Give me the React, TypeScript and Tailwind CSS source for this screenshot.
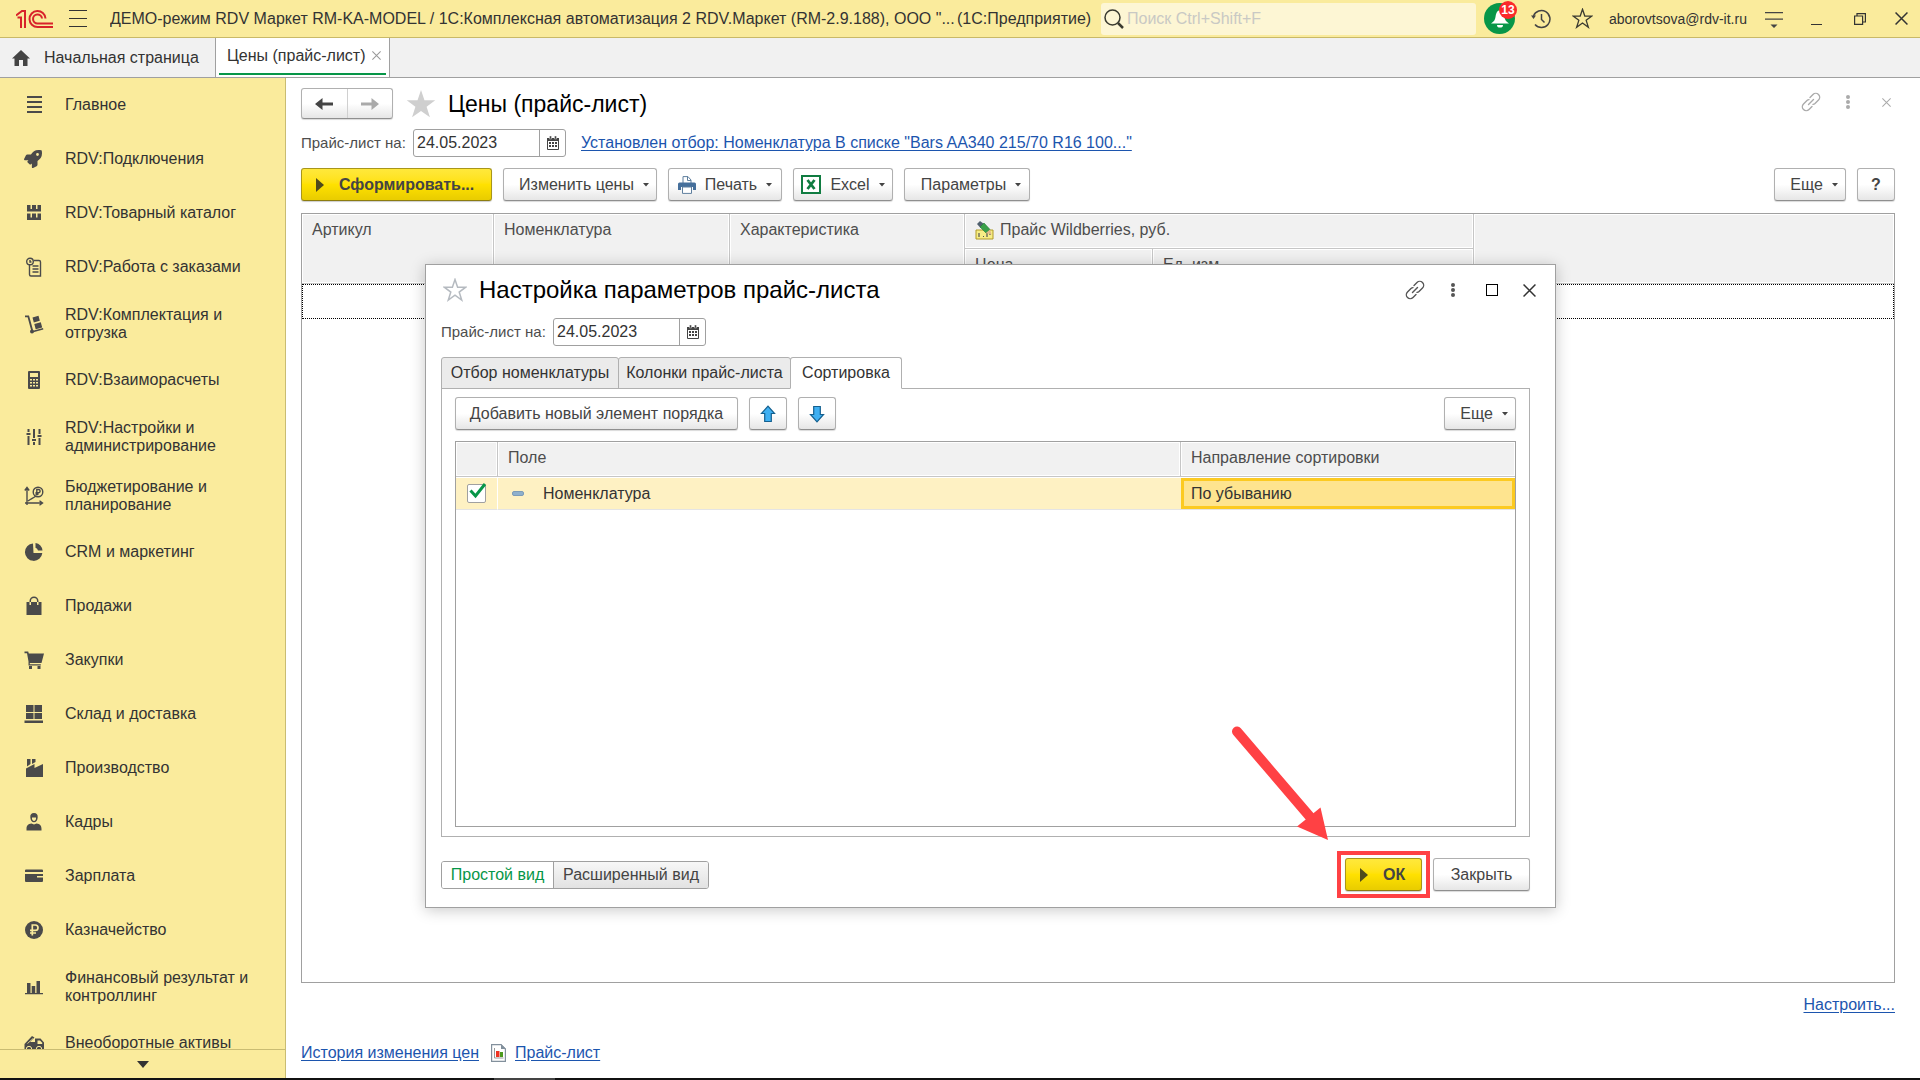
import React, { useState } from 'react';
import { FaRocket } from 'react-icons/fa';

const FONT = "font-['Liberation_Sans',Arial,sans-serif]";

/* ---------- sidebar icons, all on a 20x20 grid ---------- */

const icons: Record<string, React.ReactNode> = {
  main: (
    <g>
      <rect x="3" y="1" width="15" height="2" />
      <rect x="3" y="6" width="15" height="2" />
      <rect x="3" y="11" width="15" height="2" />
      <rect x="3" y="16" width="15" height="2" />
    </g>
  ),
  catalog: (
    <g>
      <path d="M3 2h3.500v4.500H3zM8 2h4v4.500H8zM13.500 2H17v4.500h-3.500zM3 6h14v2.500H3z" />
      <path d="M3 10.500h3.500V15H3zM8 10.500h4V15H8zM13.500 10.500H17V15h-3.500zM3 14.500h14V17H3z" />
    </g>
  ),
  orders: (
    <g fill="none" stroke="currentColor" strokeWidth="1.400">
      <circle cx="6" cy="4.500" r="3.300" />
      <path d="M6 3v2h1.500M5.500 8v9.500a1.500 1.500 0 0 0 1.500 1.500h9.500V5a1.500 1.500 0 0 0-1.500-1.500h-5" />
      <path d="M8.500 9h6M8.500 12h6M8.500 15h6" />
    </g>
  ),
  trolley: (
    <g>
      <path d="M1 1.500h4l4 14.500-1.800.5L3.600 3.300H1z" />
      <circle cx="8" cy="17.500" r="2" />
      <path d="M8.500 3.500l6-1.700 1.300 5-6 1.700zM10.300 10l6.500-1.800 1.400 5.200-6.500 1.800zM9 16.800l10-2.800.4 1.500-10 2.800z" />
    </g>
  ),
  calc: (
    <path
      fillRule="evenodd"
      d="M5 1h10a1 1 0 0 1 1 1v16a1 1 0 0 1-1 1H5a1 1 0 0 1-1-1V2a1 1 0 0 1 1-1zM6 3v4h8V3zM6 9v1.500h2V9zm3 0v1.500h2V9zm3 0v1.500h2V9zM6 12v1.500h2V12zm3 0v1.500h2V12zm3 0v1.500h2V12zM6 15v1.500h2V15zm3 0v1.500h2V15zm3 0v1.500h2V15z"
    />
  ),
  sliders: (
    <path d="M3.500 2h2v3h-2zM2.500 6h4v2h-4zM3.500 9h2v9h-2zM9 2h2v9H9zM8 12h4v2H8zM9 15h2v3H9zM14.500 2h2v5h-2zM13.500 8h4v2h-4zM14.500 11h2v7h-2z" />
  ),
  budget: (
    <g fill="none" stroke="currentColor" strokeWidth="1.400">
      <path d="M3 19V2M.8 4.500L3 1.500l2.200 3M1 17h17M15.500 14.800l3 2.200-3 2.200M4 15l3-2 2-1 3-2" />
      <circle cx="14" cy="6" r="4.800" />
      <path d="M12.800 9.500v-6h1.700a1.500 1.500 0 0 1 0 3.200h-3M11.500 8.200h3" />
    </g>
  ),
  pie: (
    <g>
      <path d="M9 1.500a8.700 8.700 0 1 0 9.300 9.500H9.500z" />
      <path d="M11.500 1a8 8 0 0 1 7 7.500h-4.500a4 4 0 0 0-2.500-2.800z" />
    </g>
  ),
  bag: (
    <path
      fillRule="evenodd"
      d="M2.500 6h3V5a4.500 4.500 0 0 1 9 0v1h3v13h-15zM7 5v4h-1.500V6H7zm6 0a3 3 0 0 0-6 0v1h6zm0 1h1.500v3H13z"
    />
  ),
  cart: (
    <path d="M.5 1.500h3.700l.6 2H20l-2.500 9.500H5.800v1.200h11v1.300H4.500v-4L3 3.200H.5zM5 16h3v3H5zM13.500 16h3v3h-3z" />
  ),
  stock: (
    <path d="M2 1h7.500v7H2zM10.500 1H18v7h-7.500zM2 9h7.500v6H2zM10.500 9H18v6h-7.500zM.5 16.500H19V19H.5z" />
  ),
  factory: (
    <path d="M3 1h3.500v5L3 8.500zM8 1h3.500v3L8 6zM2 10.500L10.500 6v4L19 6v13H2z" />
  ),
  person: (
    <g>
      <path d="M6.300 5.500C6 2.500 7.300 1 10 1s4 1.500 3.700 4.500c-.2 3-1.700 4.700-3.700 4.700s-3.500-1.700-3.700-4.700z" />
      <path d="M8 5.500h4v1C12 8 11 9 10 9S8 8 8 6.500z" fill="#faeb9c" />
      <path d="M2.500 17c0-3.500 1.500-5 5-5.500L10 12.500l2.500-1c3.500.5 5 2 5 5.500v1.500h-15z" />
    </g>
  ),
  card: <path d="M2 3.500h16a1 1 0 0 1 1 1V6H1V4.500a1 1 0 0 1 1-1zM1 8h18v2h-6v1.500h6V15a1 1 0 0 1-1 1H2a1 1 0 0 1-1-1z" />,
  ruble: (
    <g>
      <circle cx="10" cy="10" r="9" />
      <path d="M8.300 15.500V5h3a2.700 2.700 0 0 1 0 5.400H6M6 13h6" fill="none" stroke="#faeb9c" strokeWidth="1.700" />
    </g>
  ),
  bars: <path d="M3 6h3.500v10H3zM7.700 9h3.500v7H7.700zM12.500 4H16v12h-3.500zM1 16h18v1.300H1z" />,
  truck: (
    <g>
      <path d="M.5 11L8 3l2.500 1.500L6 9h5V5.500h5.500L20 9.500V16H.5z" />
      <path d="M13.500 7.500v3.500h4.700V9.800l-2.200-2.300z" fill="#faeb9c" />
      <path d="M3.500 10.500l5.500-5" stroke="#faeb9c" strokeWidth=".8" />
      <circle cx="5" cy="16" r="2.700" stroke="#faeb9c" />
      <circle cx="15" cy="16" r="2.700" stroke="#faeb9c" />
    </g>
  ),
};

const sections: { icon: string; label: string; tall?: boolean }[] = [
  { icon: 'main', label: 'Главное' },
  { icon: 'rocket', label: 'RDV:Подключения' },
  { icon: 'catalog', label: 'RDV:Товарный каталог' },
  { icon: 'orders', label: 'RDV:Работа с заказами' },
  { icon: 'trolley', label: 'RDV:Комплектация и отгрузка', tall: true },
  { icon: 'calc', label: 'RDV:Взаиморасчеты' },
  { icon: 'sliders', label: 'RDV:Настройки и администрирование', tall: true },
  { icon: 'budget', label: 'Бюджетирование и планирование', tall: true },
  { icon: 'pie', label: 'CRM и маркетинг' },
  { icon: 'bag', label: 'Продажи' },
  { icon: 'cart', label: 'Закупки' },
  { icon: 'stock', label: 'Склад и доставка' },
  { icon: 'factory', label: 'Производство' },
  { icon: 'person', label: 'Кадры' },
  { icon: 'card', label: 'Зарплата' },
  { icon: 'ruble', label: 'Казначейство' },
  { icon: 'bars', label: 'Финансовый результат и контроллинг', tall: true },
  { icon: 'truck', label: 'Внеоборотные активы' },
];

function SectionIcon({ name }: { name: string }) {
  if (name === 'rocket') return <FaRocket className="size-[18px]" />;
  return (
    <svg viewBox="0 0 20 20" className="size-5" fill="currentColor">
      {icons[name]}
    </svg>
  );
}

/* ---------- small shared drawings ---------- */

const Caret = () => (
  <svg viewBox="0 0 6 4" className="h-[4px] w-[6px] shrink-0" fill="#444">
    <path d="M0 0h6L3 3.500z" />
  </svg>
);

const Play = () => (
  <svg viewBox="0 0 8 14" className="h-[14px] w-2 shrink-0" fill="#4f4a1c">
    <path d="M0 0l8 7-8 7z" />
  </svg>
);

function Star({ className, filled }: { className: string; filled?: boolean }) {
  return (
    <svg viewBox="0 0 24 24" className={className} fill={filled ? 'currentColor' : 'none'} stroke={filled ? 'none' : 'currentColor'} strokeWidth="1.500">
      <path d="M12 1.500l2.600 7.700h8.100l-6.500 4.900 2.500 7.900L12 17.200 5.300 22l2.500-7.900-6.500-4.900h8.100z" />
    </svg>
  );
}

const LinkIcon = () => (
  <svg viewBox="0 0 20 20" className="size-5" fill="none" stroke="currentColor" strokeWidth="1.400" strokeLinecap="round">
    <path d="M9 5.500l3-3a3.800 3.800 0 0 1 5.500 5.500l-3.500 3.500a3.500 3.500 0 0 1-2 .9" />
    <path d="M11 14.500l-3 3A3.800 3.800 0 0 1 2.500 12L6 8.500a3.500 3.500 0 0 1 2-.9" />
    <path d="M7.500 12.500l5-5" />
  </svg>
);

const Dots = () => (
  <svg viewBox="0 0 4 14" className="h-[14px] w-1" fill="currentColor">
    <circle cx="2" cy="2" r="2" />
    <circle cx="2" cy="7" r="2" />
    <circle cx="2" cy="12" r="2" />
  </svg>
);

function Cross({ className }: { className: string }) {
  return (
    <svg viewBox="0 0 12 12" className={className} fill="none" stroke="currentColor" strokeWidth="1.400">
      <path d="M.5.5l11 11M11.500.5l-11 11" />
    </svg>
  );
}

const Calendar = () => (
  <svg viewBox="0 0 12 14" className="h-[14px] w-3">
    <path d="M.5 2.500h11v11H.5z" fill="#fff" stroke="#444" />
    <path d="M0 2h12v3H0z" fill="#444" />
    <path d="M2.500 0h2v3h-2zM7.500 0h2v3h-2z" fill="#444" stroke="#fff" strokeWidth=".4" />
    <path d="M2 6h2v2H2zM5 6h2v2H5zM8 6h2v2H8zM2 9h2v2H2zM5 9h2v2H5zM8 9h2v2H8z" fill="#444" />
  </svg>
);

function Arrow({ className }: { className?: string }) {
  return (
    <svg viewBox="0 0 18 14" className={`h-[14px] w-[18px] ${className ?? ''}`} fill="currentColor">
      <path d="M0 7l7.500-6v4.500H18v3H7.500V13z" />
    </svg>
  );
}

const BlueArrow = ({ down }: { down?: boolean }) => (
  <svg viewBox="0 0 16 18" className={down ? 'h-[18px] w-4 rotate-180' : 'h-[18px] w-4'}>
    <path d="M8 1.200l6.500 7.300h-3.200v8H4.700v-8H1.500z" fill="#3fb0f2" stroke="#14608f" strokeWidth="1.200" />
  </svg>
);

/* ---------- controls ---------- */

function Button({ className = '', children, ...rest }: React.ButtonHTMLAttributes<HTMLButtonElement>) {
  return (
    <button
      className={`flex h-[33px] items-center justify-center rounded-[3px] border border-[#b0b0b0] border-b-[#8f8f8f] bg-linear-to-b from-white from-50% to-[#e6e6e6] text-[#444] shadow-[0_1px_1px_rgba(0,0,0,0.15)] ${className}`}
      {...rest}
    >
      {children}
    </button>
  );
}

function YellowButton({ className = '', children }: { className?: string; children: React.ReactNode }) {
  return (
    <button
      className={`flex h-[33px] items-center rounded-[3px] border border-[#a8961a] border-b-[#8c7c10] bg-linear-to-b from-[#ffe83b] via-[#ffe100] to-[#e8cc00] font-bold text-[#444] shadow-[0_1px_1px_rgba(0,0,0,0.2)] ${className}`}
    >
      {children}
    </button>
  );
}

function DateField({ id }: { id: string }) {
  const [value, setValue] = useState('24.05.2023');
  return (
    <div className="flex h-7 items-center">
      <label htmlFor={id} className="w-28 shrink-0 text-[15px] text-[#4d4d4d]">
        Прайс-лист на:
      </label>
      <div className="flex h-7 w-[153px] overflow-hidden rounded-[3px] border border-[#a0a0a0] bg-white">
        <input
          id={id}
          value={value}
          onChange={(e) => setValue(e.target.value)}
          className="w-[125px] px-[3px] text-[#333] outline-none"
        />
        <button aria-label="Календарь" className="flex flex-1 items-center justify-center border-l border-[#a0a0a0]">
          <Calendar />
        </button>
      </div>
    </div>
  );
}

/* ---------- page parts ---------- */

function TopBar() {
  return (
    <header className="flex h-[38px] shrink-0 items-center border-b border-[#c9b968] bg-[#faeb9c] text-[#333]">
      <svg viewBox="0 0 38 20" className="ml-4 h-5 w-[38px]" fill="none" stroke="#d8232a" strokeWidth="2">
        <path d="M0 6.500L6 2h3v17M1.500 8.500h3.500V19" />
        <path d="M29.500 9.500a8 8 0 1 0-8 8.500H37" />
        <path d="M26 9.500a4.500 4.500 0 1 0-4.500 5H37" />
      </svg>
      <button aria-label="Меню" className="ml-[15px] flex h-[17px] w-[18px] flex-col justify-between">
        <span className="h-px w-full bg-[#333]" />
        <span className="h-px w-full bg-[#333]" />
        <span className="h-px w-full bg-[#333]" />
      </button>
      <div className="ml-[23px] w-[847px] shrink-0 truncate">
        ДЕМО-режим RDV Маркет RM-KA-MODEL / 1С:Комплексная автоматизация 2 RDV.Маркет (RM-2.9.188), ООО "...
      </div>
      <div className="w-[144px] shrink-0">(1С:Предприятие)</div>
      <div className="flex h-8 flex-1 items-center rounded-[3px] bg-[#fdf6d4] pl-[3px]">
        <svg viewBox="0 0 20 20" className="size-5 shrink-0" fill="none" stroke="#3a3a30">
          <circle cx="8.500" cy="8.500" r="7.500" strokeWidth="1.500" />
          <path d="M14 14l5 5" strokeWidth="2.500" />
        </svg>
        <input aria-label="Поиск" placeholder="Поиск Ctrl+Shift+F" className="ml-[3px] w-full bg-transparent outline-none placeholder:text-[#c9c9c4]" />
      </div>
      <button aria-label="Оповещения" className="relative ml-2 flex size-[31px] items-center justify-center rounded-full bg-[#079648]">
        <svg viewBox="0 0 18 18" className="size-[18px]" fill="#fff">
          <path d="M9 0c3.500 1 4 4 4.500 7S15 11.500 18 13.500H0C3 11.500 4 10 4.500 7S5.500 1 9 0zM6 15h6a3 2.600 0 0 1-6 0z" />
        </svg>
        <span className="absolute -top-[2px] -right-[2px] flex size-[18px] items-center justify-center rounded-full bg-[#fb2a2a] text-xs font-bold text-white">
          13
        </span>
      </button>
      <button aria-label="История" className="ml-4">
        <svg viewBox="0 0 20 20" className="size-5" fill="none" stroke="#444" strokeWidth="1.500">
          <path d="M2.500 7A8.500 8.500 0 1 1 4 15.500" />
          <path d="M0 6.500h5L2.500 10z" fill="#444" stroke="none" />
          <path d="M10.500 5v5.500l3 3" />
        </svg>
      </button>
      <button aria-label="Избранное" className="ml-[21px]">
        <Star className="size-[21px] text-[#3a3a30]" />
      </button>
      <span className="ml-4 w-[156px] shrink-0 text-sm">aborovtsova@rdv-it.ru</span>
      <button aria-label="Настройки" className="shrink-0">
        <svg viewBox="0 0 18 18" className="size-[18px]" fill="#444">
          <path d="M0 2h18v1.300H0zM0 8.500h18v1.300H0zM5.500 14.500h7L9 18z" />
        </svg>
      </button>
      <button aria-label="Свернуть" className="ml-7 h-3 w-[11px] border-b border-[#333]" />
      <button aria-label="Восстановить" className="ml-8">
        <svg viewBox="0 0 12 12" className="size-3" fill="none" stroke="#333" strokeWidth="1.200">
          <path d="M.6 3h8v8.400h-8zM3 3V.6h8.400V9H8.600" />
        </svg>
      </button>
      <button aria-label="Закрыть программу" className="mr-3 ml-[29px]">
        <Cross className="size-[13px]" />
      </button>
    </header>
  );
}

function WindowTabs() {
  return (
    <nav className="flex h-10 shrink-0 border-b border-[#a0a0a0] bg-[#f1f1f1] text-[#333]">
      <a href="#home" className="flex w-[216px] items-center border-r border-[#a0a0a0] pl-3">
        <svg viewBox="0 0 18 16" className="h-4 w-[18px]" fill="#444">
          <path d="M9 0l9 8.500h-2.500V16H11v-6H7v6H2.500V8.500H0z" />
        </svg>
        <span className="ml-[14px]">Начальная страница</span>
      </a>
      <div className="flex w-[174px] flex-col border-r border-[#a0a0a0] bg-white px-[3px]">
        <div className="flex flex-1 items-center pl-2">
          <a href="#prices" className="whitespace-nowrap">Цены (прайс-лист)</a>
          <button aria-label="Закрыть вкладку" className="ml-auto pr-[5px]">
            <Cross className="size-[9px] text-[#999]" />
          </button>
        </div>
        <div className="mb-[2px] h-[2px] bg-[#079648]" />
      </div>
    </nav>
  );
}

function Sidebar() {
  return (
    <aside className="flex w-[286px] shrink-0 flex-col border-r border-[#c9bc72] bg-[#faeb9c]">
      <ul className="min-h-0 flex-1 overflow-hidden">
        {sections.map((s) => (
          <li key={s.label}>
            <a href="#section" className={`flex items-center pl-6 leading-[18px] text-[#333] ${s.tall ? 'h-[59px]' : 'h-[54px]'}`}>
              <span className="flex w-[41px] shrink-0 text-[#4a4a4a]">
                <SectionIcon name={s.icon} />
              </span>
              <span className="w-[190px]">{s.label}</span>
            </a>
          </li>
        ))}
      </ul>
      <button aria-label="Прокрутить вниз" className="flex h-[29px] shrink-0 items-center justify-center border-t border-[#c9bc72]">
        <svg viewBox="0 0 12 7" className="h-[7px] w-3" fill="#333">
          <path d="M0 0h12L6 7z" />
        </svg>
      </button>
    </aside>
  );
}

const TH = 'border-r border-b border-[#c6c6c6] bg-[#f1f1f1] px-[10px] pt-1 text-left align-top font-normal text-[#4d4d4d] shadow-[inset_0_0_0_1px_#fff]';

function PriceTable() {
  return (
    <div className="mt-3 flex-1 border border-[#a0a0a0]">
      <table className="w-full table-fixed border-separate border-spacing-0">
        <colgroup>
          <col className="w-[192px]" />
          <col className="w-[236px]" />
          <col className="w-[235px]" />
          <col className="w-[188px]" />
          <col className="w-[321px]" />
          <col />
        </colgroup>
        <thead>
          <tr className="h-[35px]">
            <th rowSpan={2} className={TH}>Артикул</th>
            <th rowSpan={2} className={TH}>Номенклатура</th>
            <th rowSpan={2} className={TH}>Характеристика</th>
            <th colSpan={2} className={TH}>
              <span className="flex items-center gap-[6px]">
                <svg viewBox="0 0 19 19" className="size-[19px]">
                  <path d="M1 9h17v9H1z" fill="#f7ee85" stroke="#b09a28" />
                  <path d="M4 12v4M8 15.500h1M12 12v4M15 12v2" stroke="#555" strokeWidth="1.200" />
                  <path d="M2 3l3-3 4 3-3.500 4z" fill="#50606e" />
                  <path d="M5 6l4-4 6 6.500-4 3.500z" fill="#3aa04a" stroke="#1f7a35" strokeWidth=".6" />
                  <path d="M15 8.500l1.500 5-5.500-1.500z" fill="#e3b98a" />
                </svg>
                Прайс Wildberries, руб.
              </span>
            </th>
            <th rowSpan={2} className={`${TH} border-r-0`} />
          </tr>
          <tr className="h-[35px]">
            <th className={TH}>Цена</th>
            <th className={TH}>Ед. изм.</th>
          </tr>
        </thead>
        <tbody>
          <tr className="h-[35px] outline-1 -outline-offset-1 outline-black outline-dotted">
            <td colSpan={6} />
          </tr>
        </tbody>
      </table>
    </div>
  );
}

function PricePage() {
  return (
    <main className="flex min-w-0 flex-1 flex-col bg-white pt-[10px] pr-[25px] pl-[15px]">
      <div className="flex h-[31px] items-center">
        <div className="flex h-[31px] w-[92px] rounded-[3px] border border-[#b0b0b0] border-b-[#8f8f8f] bg-linear-to-b from-white from-50% to-[#e6e6e6] shadow-[0_1px_1px_rgba(0,0,0,0.15)]">
          <button aria-label="Назад" className="flex flex-1 items-center justify-center border-r border-[#d0d0d0] text-[#444]">
            <Arrow />
          </button>
          <button aria-label="Вперед" className="flex flex-1 items-center justify-center text-[#aaa]">
            <Arrow className="rotate-180" />
          </button>
        </div>
        <Star filled className="ml-3 size-8 text-[#cfcfcf]" />
        <h1 className="ml-[11px] text-[23px] leading-7 text-black">Цены (прайс-лист)</h1>
        <div className="ml-auto flex h-7 items-center self-start text-[#aaa]">
          <button aria-label="Ссылка"><LinkIcon /></button>
          <button aria-label="Еще действия" className="ml-[25px]"><Dots /></button>
          <button aria-label="Закрыть" className="mr-1 ml-8">
            <Cross className="size-[9px]" />
          </button>
        </div>
      </div>

      <div className="mt-[10px] flex items-center">
        <DateField id="page-date" />
        <a href="#filter" className="ml-[15px] text-[#1c55ae] underline underline-offset-2">
          Установлен отбор: Номенклатура В списке "Bars AA340 215/70 R16 100..."
        </a>
      </div>

      <div className="mt-[11px] flex gap-[11px]">
        <YellowButton className="w-[191px] pl-[14px]">
          <Play />
          <span className="ml-[15px]">Сформировать...</span>
        </YellowButton>
        <Button className="w-[154px] gap-[9px] pl-2">Изменить цены <Caret /></Button>
        <Button className="w-[114px] gap-[9px]">
          <svg viewBox="0 0 18 18" className="size-[18px] shrink-0">
            <path d="M5 7V.6h5L13 4v3" fill="#fff" stroke="#5f7f9e" />
            <path d="M9.500 1v3.500H13" fill="none" stroke="#5f7f9e" />
            <path d="M1.500 6.500h15A1.500 1.500 0 0 1 18 8v6h-3v-3H3v3H0V8a1.500 1.500 0 0 1 1.500-1.500z" fill="#456f9b" />
            <path d="M4.500 11h9v6.400h-9z" fill="#fff" stroke="#5f7f9e" />
          </svg>
          Печать <Caret />
        </Button>
        <Button className="w-[100px] gap-[9px]">
          <svg viewBox="0 0 20 19" className="h-[19px] w-5 shrink-0">
            <path d="M1 1h18v17H1z" fill="#fff" stroke="#107c41" strokeWidth="2" />
            <path d="M6.500 5l7 9M13.500 5l-7 9" stroke="#107c41" strokeWidth="2.800" />
          </svg>
          Excel <Caret />
        </Button>
        <Button className="w-[126px] gap-[9px] pl-2">Параметры <Caret /></Button>
        <Button className="ml-auto w-[72px] gap-[9px] pl-2">Еще <Caret /></Button>
        <Button className="w-[38px] font-bold">?</Button>
      </div>

      <PriceTable />

      <div className="mt-3 flex justify-end leading-5">
        <a href="#setup" className="text-[#1c55ae] underline underline-offset-2">Настроить...</a>
      </div>
      <div className="mt-7 mb-[15px] flex items-center leading-5">
        <a href="#history" className="text-[#1c55ae] underline underline-offset-2">История изменения цен</a>
        <svg viewBox="0 0 15 18" className="ml-3 h-[18px] w-[15px]">
          <path d="M.6.6h9.400l4.400 4.400v12.400H.6z" fill="#fff" stroke="#82909c" strokeWidth="1.200" />
          <path d="M10 0v5h5z" fill="#82909c" />
          <path d="M3.500 4v10h9" fill="none" stroke="#999" />
          <path d="M5 7h3.500v6H5z" fill="#ee3322" />
          <path d="M9 8h3v5H9z" fill="#4c9a1e" />
        </svg>
        <a href="#pricelist" className="ml-[9px] text-[#1c55ae] underline underline-offset-2">Прайс-лист</a>
      </div>
    </main>
  );
}

function SortTable() {
  const [checked, setChecked] = useState(true);
  return (
    <div className="mt-[11px] flex-1 border border-[#a0a0a0]">
      <table className="w-full table-fixed border-separate border-spacing-0">
        <colgroup>
          <col className="w-[42px]" />
          <col />
          <col className="w-[334px]" />
        </colgroup>
        <thead>
          <tr className="h-[35px]">
            <th className={TH} />
            <th className={TH}>Поле</th>
            <th className={`${TH} border-r-0`}>Направление сортировки</th>
          </tr>
        </thead>
        <tbody>
          <tr className="h-[33px] text-[#333]">
            <td className="border-y border-r border-white border-b-[#e4e4e4] bg-[#fef1c3] p-0">
              <label className="relative ml-[11px] flex size-[19px]">
                <input
                  type="checkbox"
                  aria-label="Использовать"
                  checked={checked}
                  onChange={(e) => setChecked(e.target.checked)}
                  className="peer size-[19px] appearance-none rounded-[2px] border border-[#a0a0a0] bg-white"
                />
                <svg viewBox="0 0 18 16" className="pointer-events-none absolute -top-px left-[2px] hidden h-4 w-[18px] peer-checked:block" fill="none" stroke="#079648" strokeWidth="3">
                  <path d="M1.500 7.500l5 5.500L16 1" />
                </svg>
              </label>
            </td>
            <td className="border-y border-white border-b-[#e4e4e4] bg-[#fef1c3] p-0">
              <span className="flex items-center">
                <span className="ml-[14px] h-[5px] w-3 rounded-[2px] border border-[#7d9cb8] bg-[#8fb0cc]" />
                <span className="ml-[19px]">Номенклатура</span>
              </span>
            </td>
            <td className="border-b border-[#e4e4e4] p-0">
              <div className="h-[31px] border-[3px] border-[#fcca21] bg-[#fee48f] pl-[7px] leading-[26px]">По убыванию</div>
            </td>
          </tr>
        </tbody>
      </table>
    </div>
  );
}

const dialogTabs = ['Отбор номенклатуры', 'Колонки прайс-листа', 'Сортировка'];
const tabWidths = ['w-[178px]', 'w-[173px]', 'w-[112px]'];

function SettingsDialog() {
  return (
    <section
      role="dialog"
      aria-label="Настройка параметров прайс-листа"
      className="absolute top-[264px] right-[364px] bottom-[172px] left-[425px] flex flex-col border border-[#a0a0a0] bg-white pr-[25px] pb-4 pl-[15px] shadow-[0_2px_14px_rgba(0,0,0,0.22)]"
    >
      <div className="mb-[3px] flex h-[50px] shrink-0 items-center">
        <Star className="ml-[2px] size-6 text-[#b5bac0]" />
        <h2 className="ml-3 text-2xl leading-7 text-black">Настройка параметров прайс-листа</h2>
        <div className="ml-auto flex items-center text-[#555]">
          <button aria-label="Ссылка"><LinkIcon /></button>
          <button aria-label="Еще действия" className="ml-[26px]"><Dots /></button>
          <button aria-label="Развернуть" className="ml-[31px] size-3 border border-black" />
          <button aria-label="Закрыть окно" className="-mr-[6px] ml-[25px] text-[#333]">
            <Cross className="size-[13px]" />
          </button>
        </div>
      </div>
      <DateField id="dialog-date" />

      <div role="tablist" className="mt-[11px] flex shrink-0">
        {dialogTabs.map((t, i) => (
          <button
            key={t}
            role="tab"
            aria-selected={i === 2}
            className={`-mb-px h-8 rounded-t-[3px] border border-[#b0b0b0] text-[#333] ${tabWidths[i]} ${
              i === 2 ? 'z-10 border-b-white bg-white' : '-mr-px bg-[#ebebeb]'
            }`}
          >
            {t}
          </button>
        ))}
      </div>
      <div className="flex min-h-0 flex-1 flex-col border border-[#b0b0b0] px-[13px] pt-2 pb-[9px]">
        <div className="flex gap-[11px]">
          <Button className="w-[283px]">Добавить новый элемент порядка</Button>
          <Button className="w-[38px]" aria-label="Вверх"><BlueArrow /></Button>
          <Button className="w-[38px]" aria-label="Вниз"><BlueArrow down /></Button>
          <Button className="ml-auto w-[72px] gap-[9px] pl-2">Еще <Caret /></Button>
        </div>
        <SortTable />
      </div>

      <div className="mt-[21px] flex shrink-0 items-center">
        <div className="flex h-7 overflow-hidden rounded-[3px] border border-[#a0a0a0]">
          <button className="w-[111px] bg-white text-[#079648]">Простой вид</button>
          <button className="w-[155px] border-l border-[#a0a0a0] bg-linear-to-b from-[#f7f7f7] to-[#e2e2e2] text-[#444]">Расширенный вид</button>
        </div>
        <div className="relative ml-auto">
          <YellowButton className="w-[77px] pl-[14px]">
            <Play />
            <span className="ml-[15px]">ОК</span>
          </YellowButton>
          {/* highlight frame and pointer over the button */}
          <div className="pointer-events-none absolute -inset-x-2 -inset-y-[7px] border-4 border-[#ff4144]" />
          <svg viewBox="0 0 100 120" className="pointer-events-none absolute -top-[134px] -left-[114px] h-[120px] w-[100px]" fill="#ff4144">
            <path d="M6 7.500L80 94" stroke="#ff4144" strokeWidth="10" strokeLinecap="round" />
            <path d="M97 116L66 102.500 89.500 83.500z" />
          </svg>
        </div>
        <Button className="ml-[11px] w-[97px]">Закрыть</Button>
      </div>
    </section>
  );
}

export default function App() {
  return (
    <div className={`relative flex h-screen flex-col overflow-hidden bg-white text-base ${FONT}`}>
      <TopBar />
      <WindowTabs />
      <div className="flex min-h-0 flex-1">
        <Sidebar />
        <PricePage />
      </div>
      <div className="flex h-[2px] shrink-0 bg-[#111]">
        <div className="ml-[494px] w-[61px] bg-[#444]" />
      </div>
      <SettingsDialog />
    </div>
  );
}
